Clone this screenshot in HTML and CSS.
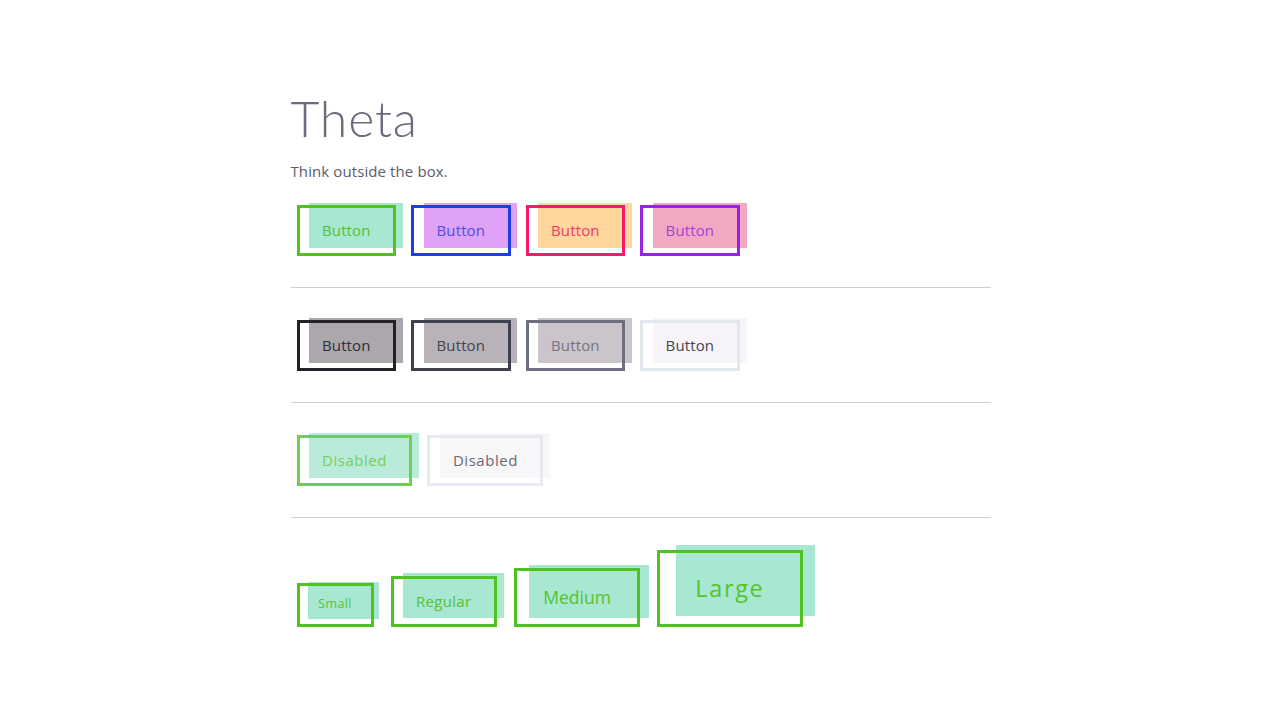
FILE: index.html
```html
<!DOCTYPE html>
<html lang="en">
<head>
    <meta charset="UTF-8">
    <meta name="viewport" content="width=device-width, initial-scale=1.0">
    <title>Theta</title>
    <link rel="stylesheet" href="styles.css">
</head>
<body>

    <main class="page">
        <h1 class="title">Theta</h1>
        <p class="tagline">Think outside the box.</p>

        <!-- colour themes -->
        <div class="row">
            <button class="btn btn-green">Button</button>
            <button class="btn btn-blue">Button</button>
            <button class="btn btn-red">Button</button>
            <button class="btn btn-purple">Button</button>
        </div>

        <hr class="divider">

        <!-- greys -->
        <div class="row">
            <button class="btn btn-black">Button</button>
            <button class="btn btn-dark">Button</button>
            <button class="btn btn-grey">Button</button>
            <button class="btn btn-light">Button</button>
        </div>

        <hr class="divider">

        <div class="row">
            <button class="btn btn-green" disabled>Disabled</button>
            <button class="btn btn-light" disabled>Disabled</button>
        </div>

        <hr class="divider">

        <!-- sizes -->
        <div class="row row-sizes">
            <button class="btn btn-green btn-small">Small</button>
            <button class="btn btn-green btn-regular">Regular</button>
            <button class="btn btn-green btn-medium">Medium</button>
            <button class="btn btn-green btn-large">Large</button>
        </div>
    </main>

</body>
</html>
```

FILE: styles.css
```css
body {
    margin: 0;
    font-family: "Open Sans", sans-serif;
    color: #5d5c6c;
    background-color: #fff;
}
.page {
    width: 700px;
    margin: 0 auto;
    padding-top: 88px;
    padding-left: 1px;
}
.title {
    margin: 0;
    font-family: Lato, sans-serif;
    font-size: 50px;
    font-weight: 300;
    line-height: 1.2;
    letter-spacing: 0.8px;
    color: #6c6b7c;
}
.tagline {
    margin: 12px 0 0;
    font-size: 15px;
    line-height: 22px;
    letter-spacing: 0.1px;
}
.row {
    display: flex;
    align-items: flex-end;
    gap: 15px;
    padding-left: 6px;
    margin-top: 23px;
}
.divider + .row {
    margin-top: 0;
}
.row-sizes {
    gap: 17px;
}
.divider {
    margin: 31px 0 32px;
    border: none;
    border-top: 1px solid #cfcfd3;
}

/* outlined frame (::after) over a colour block shifted up and right (::before) */
.btn {
    position: relative;
    z-index: 0;
    padding: calc(0.75em + 3px) calc(1.5em + 3px);
    font-family: "Open Sans", sans-serif;
    font-size: 15px;
    line-height: 1.5;
    letter-spacing: 0.008em;
    border: none;
    background: transparent;
    cursor: pointer;
}
.btn::before {
    content: "";
    position: absolute;
    z-index: -1;
    top: calc(3px - 0.34em);
    left: calc(3px + 0.66em);
    right: calc(3px - 0.66em);
    bottom: calc(3px + 0.34em);
    background-color: var(--fill);
}
.btn::after {
    content: "";
    position: absolute;
    inset: 0;
    border: 3px solid var(--line);
}
.btn:disabled {
    opacity: 0.8;
    letter-spacing: 0.035em;
    cursor: default;
}

.btn-green {
    --fill: #a8e7d1;
    --line: #50c221;
    color: #55c32f;
}
.btn-blue {
    --fill: #e0a2f6;
    --line: #1c3ee9;
    color: #4f4ee6;
}
.btn-red {
    --fill: #ffd69b;
    --line: #f6196c;
    color: #f3366c;
}
.btn-purple {
    --fill: #f2a8c3;
    --line: #9a22df;
    color: #a243d4;
}
.btn-black {
    --fill: #aba7ac;
    --line: #232229;
    color: #2f2e36;
}
.btn-dark {
    --fill: #b9b3b9;
    --line: #3f404f;
    color: #44434f;
}
.btn-grey {
    --fill: #cbc4cb;
    --line: #6f6e80;
    color: #77737f;
}
.btn-light {
    --fill: #f6f4f8;
    --line: #e2e7ee;
    color: #45444f;
}

.btn-small {
    font-size: 12.5px;
    letter-spacing: 0.03em;
}
.btn-regular {
    letter-spacing: 0.02em;
}
.btn-medium {
    font-size: 17.5px;
    letter-spacing: 0;
}
.btn-large {
    font-size: 23.5px;
    letter-spacing: 0.07em;
}
```
